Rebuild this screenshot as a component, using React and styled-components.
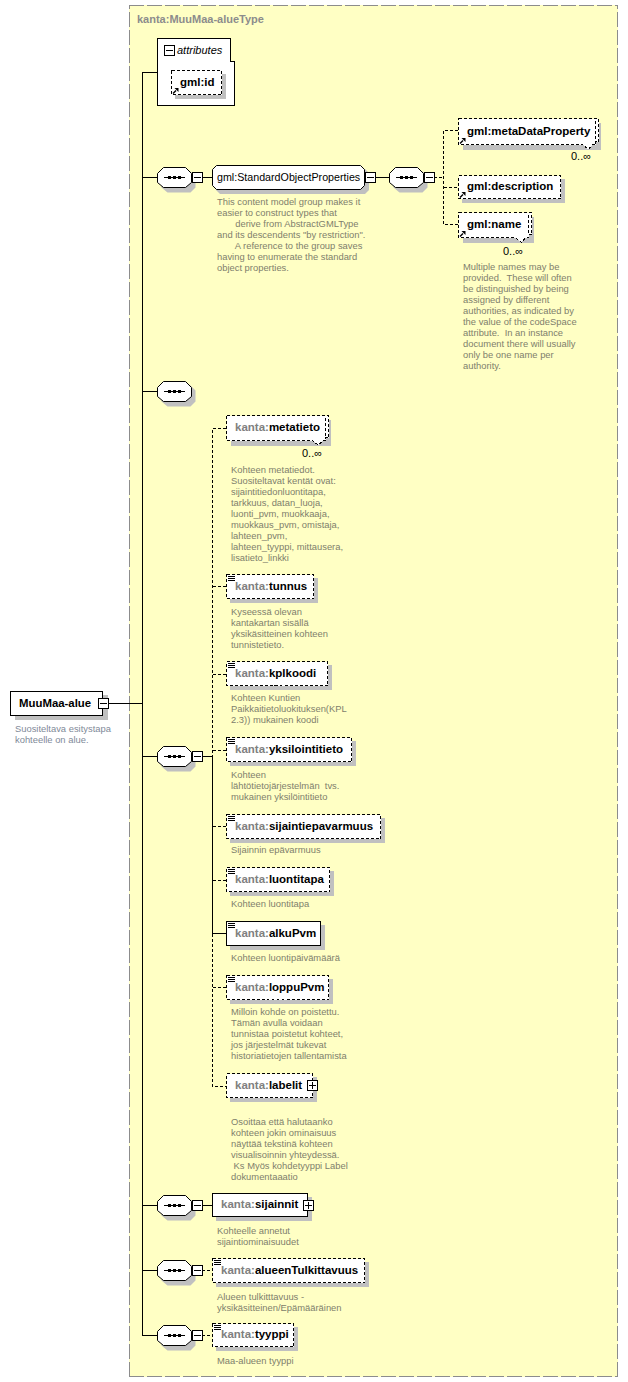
import styled, { createGlobalStyle, css } from "styled-components";

const SANS = `"Liberation Sans", Arial, sans-serif`;

const elements = [
  { x: 458, y: 118, w: 141, h: 27, name: "gml:metaDataProperty", dashed: true, repeat: true, ref: true },
  { x: 458, y: 175, w: 103, h: 24, name: "gml:description", dashed: true, ref: true },
  { x: 458, y: 212, w: 74, h: 26, name: "gml:name", dashed: true, repeat: true, ref: true },
  { x: 171, y: 70, w: 51, h: 25, name: "gml:id", dashed: true, ref: true },
  { x: 226, y: 415, w: 103, h: 26, prefix: "kanta:", name: "metatieto", dashed: true, repeat: true },
  { x: 226, y: 574, w: 88, h: 25, prefix: "kanta:", name: "tunnus", dashed: true, list: true },
  { x: 226, y: 661, w: 102, h: 25, prefix: "kanta:", name: "kplkoodi", dashed: true, list: true },
  { x: 226, y: 737, w: 126, h: 25, prefix: "kanta:", name: "yksilointitieto", dashed: true, list: true },
  { x: 226, y: 814, w: 155, h: 25, prefix: "kanta:", name: "sijaintiepavarmuus", dashed: true, list: true },
  { x: 226, y: 867, w: 104, h: 25, prefix: "kanta:", name: "luontitapa", dashed: true, list: true },
  { x: 226, y: 921, w: 95, h: 25, prefix: "kanta:", name: "alkuPvm", list: true },
  { x: 226, y: 975, w: 103, h: 25, prefix: "kanta:", name: "loppuPvm", dashed: true, list: true },
  { x: 226, y: 1073, w: 87, h: 25, prefix: "kanta:", name: "labelit", dashed: true, expand: true },
  { x: 212, y: 1193, w: 96, h: 24, prefix: "kanta:", name: "sijainnit", expand: true },
  { x: 212, y: 1258, w: 153, h: 25, prefix: "kanta:", name: "alueenTulkittavuus", dashed: true, list: true },
  { x: 212, y: 1323, w: 82, h: 24, prefix: "kanta:", name: "tyyppi", dashed: true, list: true },
];

const sequences = [
  { x: 157, y: 167, toggle: true },
  { x: 389, y: 167, toggle: true },
  { x: 157, y: 381 },
  { x: 157, y: 746, toggle: true },
  { x: 157, y: 1195, toggle: true },
  { x: 157, y: 1260, toggle: true },
  { x: 157, y: 1325, toggle: true },
];

const solidWires = [
  "M108.5 703.5H142.5",
  "M142.5 72V1335.5H157",
  "M142 72.5H157",
  "M142 177.5H157",
  "M142 391.5H157",
  "M142 756.5H157",
  "M142 1205.5H157",
  "M142 1270.5H157",
  "M202 177.5H212",
  "M375 177.5H389",
  "M202 756.5H212.5V933.5H226",
  "M202 1205.5H212",
];

const dashedWires = [
  "M434 177.5H443.5",
  "M458 130.5H443.5V224.5H458",
  "M443.5 187.5H458",
  "M226 428.5H212.5V756",
  "M212.5 934V1086.5H226",
  "M212.5 586.5H226",
  "M212.5 674.5H226",
  "M212.5 750.5H226",
  "M212.5 826.5H226",
  "M212.5 880.5H226",
  "M212.5 987.5H226",
  "M202 1270.5H212",
  "M202 1335.5H212",
];

const docs = [
  {
    x: 217, y: 196,
    text: "This content model group makes it\neasier to construct types that\n       derive from AbstractGMLType\nand its descendents \"by restriction\".\n       A reference to the group saves\nhaving to enumerate the standard\nobject properties.",
  },
  {
    x: 463, y: 261,
    text: "Multiple names may be\nprovided.  These will often\nbe distinguished by being\nassigned by different\nauthorities, as indicated by\nthe value of the codeSpace\nattribute.  In an instance\ndocument there will usually\nonly be one name per\nauthority.",
  },
  {
    x: 231, y: 464,
    text: "Kohteen metatiedot.\nSuositeltavat kentät ovat:\nsijaintitiedonluontitapa,\ntarkkuus, datan_luoja,\nluonti_pvm, muokkaaja,\nmuokkaus_pvm, omistaja,\nlahteen_pvm,\nlahteen_tyyppi, mittausera,\nlisatieto_linkki",
  },
  { x: 231, y: 606, text: "Kyseessä olevan\nkantakartan sisällä\nyksikäsitteinen kohteen\ntunnistetieto." },
  { x: 231, y: 692, text: "Kohteen Kuntien\nPaikkaitietoluokituksen(KPL\n2.3)) mukainen koodi" },
  { x: 231, y: 769, text: "Kohteen\nlähtötietojärjestelmän  tvs.\nmukainen yksilöintitieto" },
  { x: 231, y: 844, text: "Sijainnin epävarmuus" },
  { x: 231, y: 898, text: "Kohteen luontitapa" },
  { x: 231, y: 952, text: "Kohteen luontipäivämäärä" },
  { x: 231, y: 1006, text: "Milloin kohde on poistettu.\nTämän avulla voidaan\ntunnistaa poistetut kohteet,\njos järjestelmät tukevat\nhistoriatietojen tallentamista" },
  { x: 231, y: 1116, text: "Osoittaa että halutaanko\nkohteen jokin ominaisuus\nnäyttää tekstinä kohteen\nvisualisoinnin yhteydessä.\n Ks Myös kohdetyyppi Label\ndokumentaaatio" },
  { x: 217, y: 1225, text: "Kohteelle annetut\nsijaintiominaisuudet" },
  { x: 217, y: 1291, text: "Alueen tulkitttavuus -\nyksikäsitteinen/Epämääräinen" },
  { x: 217, y: 1355, text: "Maa-alueen tyyppi" },
  { x: 15, y: 723, text: "Suositeltava esitystapa\nkohteelle on alue." },
];

const occurs = [
  { x: 571, y: 150 },
  { x: 503, y: 245 },
  { x: 302, y: 447 },
];

const toggles = [
  { x: 98, y: 698 },
  { x: 365, y: 172 },
  { x: 192, y: 172 },
  { x: 424, y: 172 },
  { x: 192, y: 751 },
  { x: 192, y: 1200 },
  { x: 192, y: 1265 },
  { x: 192, y: 1330 },
  { x: 307, y: 1080, plus: true },
  { x: 303, y: 1200, plus: true },
];

const GlobalStyle = createGlobalStyle`
  html, body {
    margin: 0;
    padding: 0;
    background: #fff;
  }
`;

const placed = css`
  position: absolute;
  left: ${(p) => p.$x}px;
  top: ${(p) => p.$y}px;
`;

const Canvas = styled.div`
  position: relative;
  width: 628px;
  height: 1382px;
  overflow: hidden;
  background: #fff;
  font-family: ${SANS};
`;

const Panel = styled.div`
  ${placed}
  box-sizing: border-box;
  width: 489px;
  height: 1372px;
  padding: 8px 8px;
  background-color: #ffffc4;
  background-image:
    repeating-linear-gradient(90deg, #8c8c8c 0 15px, transparent 15px 18px),
    repeating-linear-gradient(90deg, #8c8c8c 0 15px, transparent 15px 18px),
    repeating-linear-gradient(0deg, #8c8c8c 0 15px, transparent 15px 18px),
    repeating-linear-gradient(0deg, #8c8c8c 0 15px, transparent 15px 18px);
  background-size: 100% 1px, 100% 1px, 1px 100%, 1px 100%;
  background-position: 0 0, 0 100%, 0 0, 100% 0;
  background-repeat: no-repeat;
`;

const PanelTitle = styled.div`
  font-size: 11px;
  line-height: 13px;
  font-weight: 700;
  color: #8c8c8c;
`;

const Wires = styled.svg`
  position: absolute;
  left: 0;
  top: 0;
  width: 628px;
  height: 1382px;
  shape-rendering: crispEdges;
`;

const Frame = styled.svg`
  position: absolute;
  left: 0;
  top: 0;
  overflow: visible;
`;

const Node = styled.div`
  ${placed}
  width: ${(p) => p.$w}px;
  height: ${(p) => p.$h}px;
`;

const Label = styled.div`
  position: absolute;
  left: 9px;
  top: -1px;
  height: 100%;
  display: flex;
  align-items: center;
  font-size: 11.5px;
  font-weight: 700;
  color: #000;
  white-space: pre;
`;

const Prefix = styled.span`
  color: #808080;
`;

const GroupLabel = styled.div`
  position: absolute;
  left: 5px;
  top: -1px;
  height: 100%;
  display: flex;
  align-items: center;
  font-size: 10.7px;
  color: #000;
  white-space: pre;
`;

const MainLabel = styled(Label)`
  font-size: 11.4px;
`;

const Doc = styled.div`
  ${placed}
  font-size: 9.4px;
  line-height: 11px;
  color: #80806c;
  white-space: pre;
`;

const DocOnWhite = styled(Doc)`
  color: #7f8a99;
`;

const Occurs = styled.div`
  ${placed}
  font-size: 11px;
  line-height: 12px;
  color: #000;
`;

const Toggle = styled.div`
  ${placed}
  box-sizing: border-box;
  width: 11px;
  height: 11px;
  border: 1px solid #000;
  background: #fff;

  &::before {
    content: "";
    position: absolute;
    left: 1px;
    right: 1px;
    top: 4px;
    height: 1px;
    background: #000;
  }

  ${(p) =>
    p.$plus &&
    css`
      &::after {
        content: "";
        position: absolute;
        top: 1px;
        bottom: 1px;
        left: 4px;
        width: 1px;
        background: #000;
      }
    `}
`;

const AttrToggle = styled(Toggle)`
  left: 7px;
  top: 7px;
`;

const AttrTitle = styled.div`
  position: absolute;
  left: 20px;
  top: 6px;
  font-size: 11px;
  line-height: 13px;
  font-style: italic;
  color: #000;
`;

function outline(w, h, repeat) {
  if (!repeat) return `M.5 .5H${w - 0.5}V${h - 0.5}H.5Z`;
  return `M.5 .5H${w - 0.5}V${h - 3.5}H${w - 3.5}V${h - 0.5}H${w - 6.5}L${w - 10.5} ${h + 4.5}L${w - 16.5} ${h - 0.5}H.5Z`;
}

function ElementNode({ x, y, w, h, prefix, name, dashed, repeat, ref, list }) {
  const shadow = repeat ? 5 : 4;
  return (
    <Node $x={x} $y={y} $w={w} $h={h}>
      <Frame width={w + 6} height={h + 6}>
        <rect x={shadow} y={shadow} width={w - (repeat ? 3 : 0)} height={h} fill="#c0c0c0" />
        <path
          d={outline(w, h, repeat)}
          fill="#fff"
          stroke="#000"
          strokeDasharray={dashed ? "3 2" : undefined}
          shapeRendering="crispEdges"
        />
        {repeat && (
          <path d={`M${w - 3.5} 3V${h - 3}`} stroke="#000" strokeDasharray={dashed ? "3 2" : undefined} shapeRendering="crispEdges" />
        )}
        {list && (
          <path d={`M2 2.5H9M2 4.5H9M2 6.5H9`} stroke="#000" shapeRendering="crispEdges" />
        )}
        {ref && (
          <g fill="#000">
            <path d={`M2 ${h - 1.5}L5 ${h - 4.5}`} stroke="#000" strokeWidth="1.5" />
            <path d={`M3.5 ${h - 7}H7.5V${h - 3}Z`} />
          </g>
        )}
      </Frame>
      <Label>
        {prefix && <Prefix>{prefix}</Prefix>}
        {name}
      </Label>
    </Node>
  );
}

function Sequence({ x, y }) {
  return (
    <Node $x={x} $y={y} $w={35} $h={21}>
      <Frame width={40} height={26}>
        <path d="M10.5 4.5H33.5L38.5 9.5V20.5L33.5 25.5H10.5L4.5 20.5V9.5Z" fill="#c0c0c0" />
        <path d="M6.5 .5H28.5L34.5 6.5V15.5L28.5 20.5H6.5L.5 15.5V6.5Z" fill="#fff" stroke="#000" />
        <path d="M7 10.5H28" stroke="#000" shapeRendering="crispEdges" />
        <path d="M11 9h3v3h-3zM16 9h3v3h-3zM21 9h3v3h-3z" fill="#000" />
      </Frame>
    </Node>
  );
}

function GroupNode({ x, y, w, h, name }) {
  return (
    <Node $x={x} $y={y} $w={w} $h={h}>
      <Frame width={w + 6} height={h + 6}>
        <path d={`M8 4H${w}L${w + 4} 8V${h}L${w} ${h + 4}H8L4 ${h}V8Z`} fill="#c0c0c0" />
        <path
          d={`M4.5 .5H${w - 4.5}L${w - 0.5} 4.5V${h - 4.5}L${w - 4.5} ${h - 0.5}H4.5L.5 ${h - 4.5}V4.5Z`}
          fill="#fff"
          stroke="#000"
        />
      </Frame>
      <GroupLabel>{name}</GroupLabel>
    </Node>
  );
}

function AttributesBox() {
  return (
    <Node $x={157} $y={38} $w={78} $h={68}>
      <Frame width={78} height={68}>
        <path d="M.5 .5H73.5V23.5H77.5V67.5H.5Z" fill="#fff" stroke="#000" shapeRendering="crispEdges" />
      </Frame>
      <AttrToggle />
      <AttrTitle>attributes</AttrTitle>
    </Node>
  );
}

function MainNode() {
  return (
    <Node $x={10} $y={691} $w={93} $h={25}>
      <Frame width={99} height={31}>
        <rect x="5" y="4" width="93" height="25" fill="#c0c0c0" />
        <rect x=".5" y=".5" width="92" height="24" fill="#fff" stroke="#000" shapeRendering="crispEdges" />
      </Frame>
      <MainLabel>MuuMaa-alue</MainLabel>
    </Node>
  );
}

export default function App() {
  return (
    <Canvas>
      <GlobalStyle />
      <Panel $x={129} $y={5}>
        <PanelTitle>kanta:MuuMaa-alueType</PanelTitle>
      </Panel>

      <Wires viewBox="0 0 628 1382">
        {solidWires.map((d) => (
          <path key={d} d={d} fill="none" stroke="#000" />
        ))}
        {dashedWires.map((d) => (
          <path key={d} d={d} fill="none" stroke="#000" strokeDasharray="3 2" />
        ))}
      </Wires>

      <MainNode />
      <AttributesBox />
      <GroupNode x={212} y={165} w={153} h={25} name="gml:StandardObjectProperties" />
      {sequences.map((s) => (
        <Sequence key={`${s.x}-${s.y}`} x={s.x} y={s.y} />
      ))}
      {elements.map((el) => (
        <ElementNode key={el.name} {...el} />
      ))}
      {toggles.map((t) => (
        <Toggle key={`${t.x}-${t.y}`} $x={t.x} $y={t.y} $plus={t.plus} />
      ))}
      {occurs.map((o) => (
        <Occurs key={o.x} $x={o.x} $y={o.y}>0..∞</Occurs>
      ))}
      {docs.map((d) =>
        d.x === 15 ? (
          <DocOnWhite key={d.y} $x={d.x} $y={d.y}>{d.text}</DocOnWhite>
        ) : (
          <Doc key={d.y} $x={d.x} $y={d.y}>{d.text}</Doc>
        )
      )}
    </Canvas>
  );
}
